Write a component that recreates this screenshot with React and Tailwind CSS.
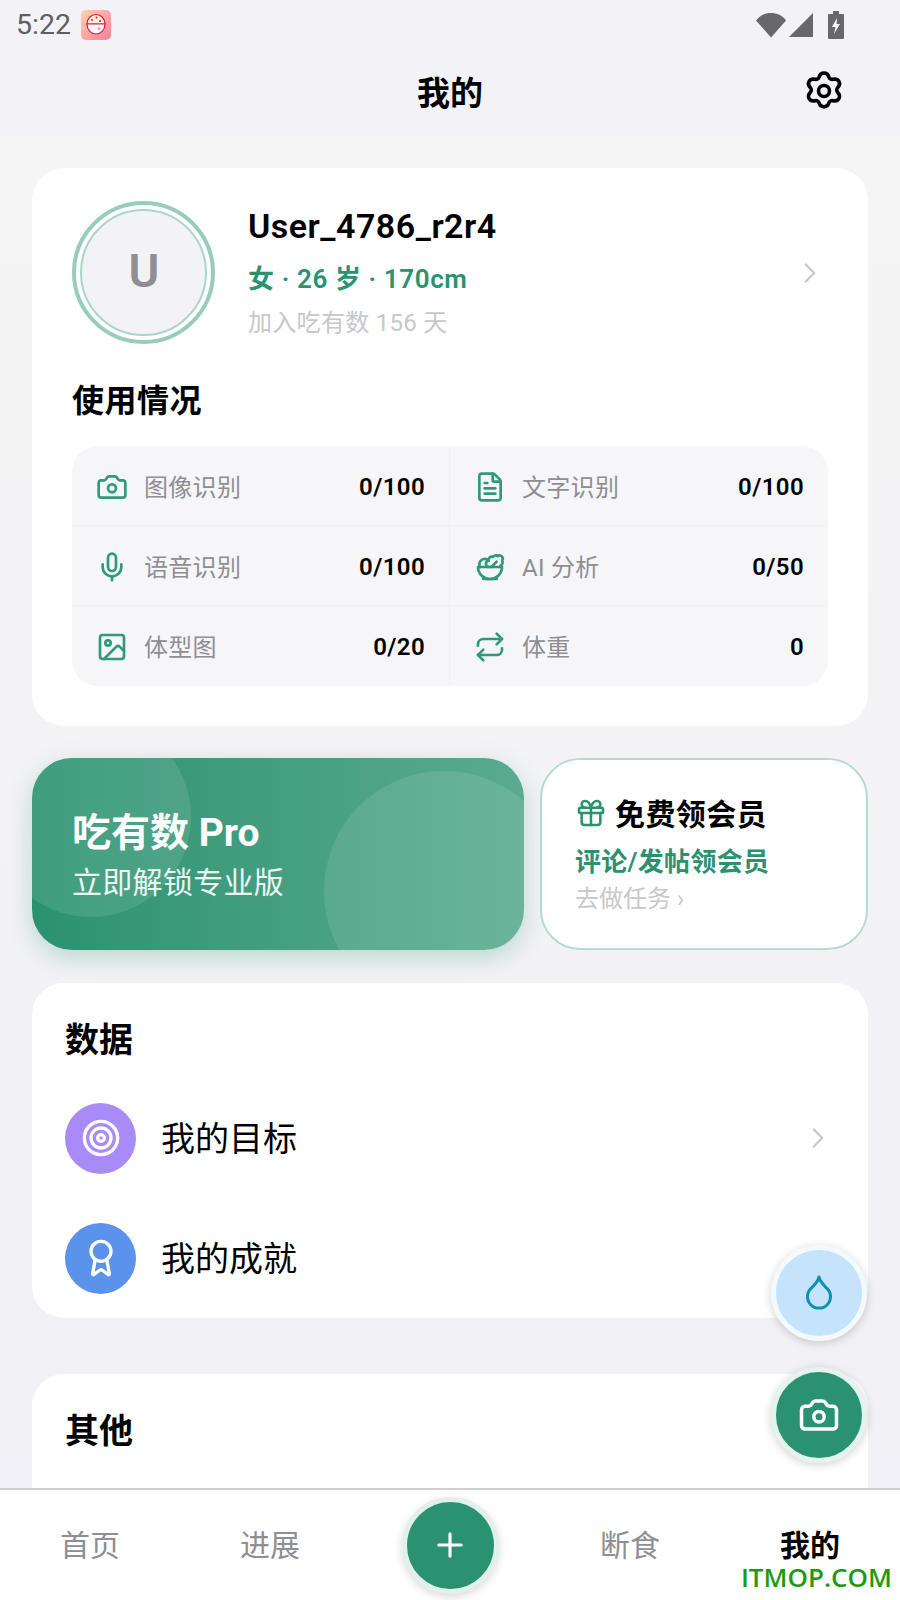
import { Award, Camera, ChevronRight, FileText, Gift, Image, Mic, Plus, Repeat, Salad, Target } from 'lucide-react';

const usage = [
  [Camera, '图像识别', '0/100'],
  [FileText, '文字识别', '0/100'],
  [Mic, '语音识别', '0/100'],
  [Salad, 'AI 分析', '0/50'],
  [Image, '体型图', '0/20'],
  [Repeat, '体重', '0'],
];

const tabs = ['首页', '进展', null, '断食', '我的'];

function StatusBar() {
  return (
    <div className="flex h-[48px] items-center justify-between pl-[16px] pr-[56px] pt-[2px]">
      <div className="flex items-center gap-[10px]">
        <span className="text-[28.500px] text-[#5f5f63]">5:22</span>
        <svg width="30" height="30" viewBox="0 0 30 30">
          <defs>
            <linearGradient id="app" x1="0" y1="0" x2="1" y2="1">
              <stop offset="0" stopColor="#ffd2ae" />
              <stop offset="1" stopColor="#ff7f98" />
            </linearGradient>
          </defs>
          <rect width="30" height="30" rx="5" fill="url(#app)" />
          <path d="M6 14a9 9.500 0 0 1 18 0z" fill="#fff3d8" stroke="#d81b4c" strokeWidth="1.200" />
          <path d="M6 14h18a9 10 0 0 1-18 0z" fill="#fff" stroke="#d81b4c" strokeWidth="1.200" />
          <circle cx="11" cy="10" r="1" fill="#d81b4c" />
          <circle cx="15.500" cy="7.500" r="1" fill="#d81b4c" />
          <circle cx="19" cy="11" r="1" fill="#d81b4c" />
          <circle cx="18" cy="18.500" r="1.500" fill="#ff8fa3" />
        </svg>
      </div>
      <div className="flex items-center gap-[14px]">
        <div className="flex items-center gap-[2px]">
          <svg width="30" height="26" viewBox="0 0 30 26">
            <path d="M0 8.500C4 3 9 1 15 1s11 2 15 7.500L15 25.500z" fill="#68686c" />
          </svg>
          <svg width="26" height="26" viewBox="0 0 26 26">
            <path d="M25 1v24H1z" fill="#68686c" />
          </svg>
        </div>
        <svg width="16" height="28" viewBox="0 0 16 28">
          <path d="M5 0h6v3h4a1 1 0 0 1 1 1v23a1 1 0 0 1-1 1H1a1 1 0 0 1-1-1V4a1 1 0 0 1 1-1h4z" fill="#68686c" />
          <path d="M9 7 4 16h3.500L6 23l6-10H8.500z" fill="#fff" />
        </svg>
      </div>
    </div>
  );
}

function Header() {
  return (
    <div className="relative flex h-[88px] items-center justify-center">
      <h1 className="mt-[4px] text-[33px] font-bold text-black">我的</h1>
      <svg className="absolute right-[56px] top-[22px]" width="40" height="42" viewBox="0 0 40 42" fill="none" stroke="#000" strokeWidth="3.600" strokeLinejoin="round">
        <path d="M20 3c2.800 0 4.300 2 5 4.200.5 1.600 2.200 2.500 3.800 2.100 2.300-.5 4.700-.3 6.100 2.100 1.400 2.400.3 4.600-1.300 6.300-1.100 1.200-1.100 3.400 0 4.600 1.600 1.700 2.700 3.900 1.300 6.300-1.400 2.400-3.800 2.600-6.100 2.100-1.600-.4-3.300.5-3.800 2.100-.7 2.200-2.200 4.200-5 4.200s-4.300-2-5-4.200c-.5-1.600-2.200-2.500-3.800-2.100-2.300.5-4.700.3-6.100-2.100-1.400-2.400-.3-4.600 1.300-6.300 1.100-1.200 1.100-3.400 0-4.600-1.600-1.700-2.700-3.900-1.300-6.300 1.400-2.400 3.800-2.600 6.100-2.100 1.600.4 3.300-.5 3.800-2.100.7-2.200 2.200-4.200 5-4.200z" />
        <circle cx="20" cy="21" r="5.500" />
      </svg>
    </div>
  );
}

function ProfileCard() {
  return (
    <section className="rounded-[32px] bg-white px-[40px] pb-[40px] pt-[33px]">
      <div className="flex items-center">
        <div className="flex h-[143px] w-[143px] items-center justify-center rounded-full border-[4px] border-[#97cdb9] bg-white">
          <div className="flex h-[127px] w-[127px] items-center justify-center rounded-full border-[2px] border-[#a9d6c5] bg-[#f2f2f7] pb-[2px] pl-[1px] text-[47px] font-semibold text-[#8e8e93]">
            U
          </div>
        </div>
        <div className="ml-[33px] flex-1 pb-[2px]">
          <div className="text-[34px] font-semibold leading-[44px] tracking-[0.5px] text-black">User_4786_r2r4</div>
          <div className="mt-[13px] text-[26px] font-semibold leading-[36px] tracking-[0.6px] text-[#2a9270]">女 · 26 岁 · 170cm</div>
          <div className="mt-[9px] text-[24px] leading-[34px] tracking-[0.3px] text-[#c7c7cc]">加入吃有数 156 天</div>
        </div>
        <ChevronRight className="mr-[1px] text-[#c7c7cc]" size={34} strokeWidth={1.6} />
      </div>
      <h2 className="mt-[33px] text-[32px] font-bold leading-[48px] tracking-[0.5px] text-black">使用情况</h2>
      <div className="mt-[21px] grid grid-cols-2 overflow-hidden rounded-[26px] bg-[#f6f6f9]">
        {usage.map(([Icon, label, value], i) => (
          <div
            key={label}
            className={`flex h-[80px] items-center pl-[24px] pr-[24px] pt-[2px] ${i % 2 === 0 ? 'border-r-[1px] border-[#f0f0f3]' : ''} ${i < 4 ? 'border-b-[1px] border-[#f0f0f3]' : ''}`}
          >
            <Icon className="text-[#2f9a78]" size={32} strokeWidth={2} />
            <span className="ml-[16px] flex-1 pt-[2px] text-[24px] tracking-[0.3px] text-[#8e8e93]">{label}</span>
            <span className="text-[24px] font-semibold tracking-[0.4px] text-black">{value}</span>
          </div>
        ))}
      </div>
    </section>
  );
}

function PromoRow() {
  return (
    <div className="mt-[32px] flex h-[192px] gap-[16px]">
      <div className="relative flex w-[492px] flex-col justify-center overflow-hidden rounded-[40px] bg-gradient-to-r from-[#2a9270] to-[#5aab90] pl-[40px] pt-[3px] shadow-[0_8px_24px_rgba(42,146,112,0.28)]">
        <div className="absolute left-[-41px] top-[-41px] h-[200px] w-[200px] rounded-full bg-white/10" />
        <div className="absolute left-[292px] top-[13px] h-[240px] w-[240px] rounded-full bg-white/10" />
        <div className="relative text-[39px] font-bold leading-[50px] text-white">吃有数 Pro</div>
        <div className="relative mt-[4px] text-[30px] leading-[42px] tracking-[0.3px] text-white/90">立即解锁专业版</div>
      </div>
      <div className="flex w-[328px] flex-col justify-center rounded-[40px] border-[2px] border-[#b5dccf] bg-white pl-[33px] pt-[2px]">
        <div className="flex items-center gap-[8px]">
          <Gift className="mt-[-4px] text-[#2a9270]" size={32} strokeWidth={1.9} />
          <span className="text-[30px] font-bold leading-[42px] tracking-[0.4px] text-black">免费领会员</span>
        </div>
        <div className="mt-[8px] text-[26px] font-semibold leading-[36px] tracking-[0.3px] text-[#2a9270]">评论/发帖领会员</div>
        <div className="mt-[2px] text-[24px] leading-[34px] text-[#c7c7cc]">去做任务 ›</div>
      </div>
    </div>
  );
}

function DataCard() {
  return (
    <section className="mt-[33px] rounded-[32px] bg-white px-[33px]">
      <h2 className="pt-[33px] text-[34px] font-bold leading-[48px] text-black">数据</h2>
      <div className="mt-[14px] flex h-[120px] items-center">
        <div className="flex h-[71px] w-[71px] items-center justify-center rounded-full bg-[#a98bf8]">
          <Target className="text-white" size={40} strokeWidth={2} />
        </div>
        <span className="ml-[25px] flex-1 pt-[2px] text-[34px] text-black">我的目标</span>
        <ChevronRight className="text-[#c7c7cc]" size={34} strokeWidth={1.6} />
      </div>
      <div className="flex h-[120px] items-center">
        <div className="flex h-[71px] w-[71px] items-center justify-center rounded-full bg-[#5a92ec]">
          <Award className="text-white" size={40} strokeWidth={2} />
        </div>
        <span className="ml-[25px] flex-1 pt-[2px] text-[34px] text-black">我的成就</span>
      </div>
    </section>
  );
}

function BottomNav() {
  return (
    <nav className="grid h-[112px] grid-cols-5 border-t-[2px] border-[#cfcfd1] bg-white">
      {tabs.map((tab, i) =>
        tab ? (
          <div key={tab} className={`flex items-center justify-center text-[30px] ${tab === '我的' ? 'font-bold text-black' : 'text-[#8e8e93]'}`}>
            {tab}
          </div>
        ) : (
          <div key={i} className="flex items-center justify-center">
            <div className="flex h-[97px] w-[97px] items-center justify-center rounded-full border-[5px] border-[#e0f0ea] bg-[#2a9270] shadow-[0_3px_10px_rgba(0,0,0,0.15)]">
              <Plus className="text-white" size={38} strokeWidth={2} />
            </div>
          </div>
        ),
      )}
    </nav>
  );
}

export default function App() {
  return (
    <div
      className="relative flex h-[1600px] w-[900px] flex-col overflow-hidden bg-[#f1f1f6]"
      style={{ fontFamily: 'Roboto, "Noto Sans CJK SC", sans-serif' }}
    >
      <div className="h-[136px] bg-[#f2f2f7]">
        <StatusBar />
        <Header />
      </div>
      <main className="flex-1 overflow-hidden bg-gradient-to-b from-[#f6f5f5] to-[#f0f0f6] px-[32px] pt-[32px]">
        <ProfileCard />
        <PromoRow />
        <DataCard />
        <section className="mt-[56px] h-[200px] rounded-[32px] bg-white px-[33px] pt-[33px]">
          <h2 className="text-[34px] font-bold leading-[48px] text-black">其他</h2>
        </section>
      </main>
      <BottomNav />

      <div className="absolute left-[771px] top-[1245px] flex h-[96px] w-[96px] items-center justify-center rounded-full border-[5px] border-[#f4f9fe] bg-[#c5e3fa] shadow-[0_2px_10px_rgba(0,0,0,0.18)]">
        <svg width="30" height="36" viewBox="0 0 30 36" fill="none" stroke="#0e8fb5" strokeWidth="3" strokeLinejoin="round">
          <path d="M15 2c.5 4 4 7 7 10.500a11.500 11.500 0 1 1-14 0C11 9 14.500 6 15 2z" />
        </svg>
      </div>
      <div className="absolute left-[771px] top-[1367px] flex h-[96px] w-[96px] items-center justify-center rounded-full border-[5px] border-[#e5f3ed] bg-[#2a9270] shadow-[0_2px_10px_rgba(0,0,0,0.18)]">
        <Camera className="text-white" size={42} strokeWidth={2} />
      </div>
      <div className="absolute right-[8px] top-[1561px] text-[26px] font-semibold leading-[32px] text-[#1f9a10]" style={{ fontFamily: '"Open Sans", sans-serif' }}>
        ITMOP.COM
      </div>
    </div>
  );
}
